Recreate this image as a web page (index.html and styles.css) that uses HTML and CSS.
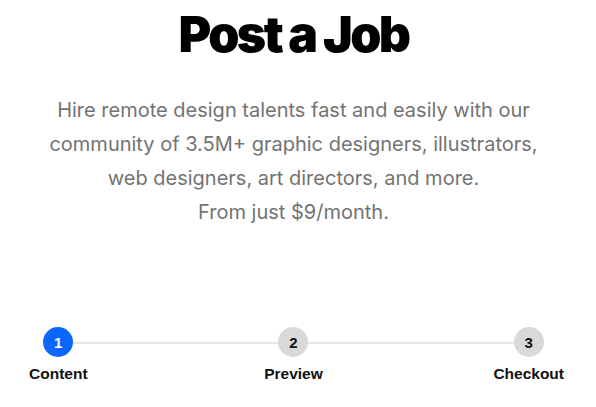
FILE: index.html
```html
<!DOCTYPE html>
<html>
<head>
<meta charset="utf-8">
<link rel="stylesheet" href="styles.css">
</head>
<body>
<main class="page">
  <h1 class="title">Post a Job</h1>
  <p class="lead">Hire remote design talents fast and easily with our community of 3.5M+ graphic designers, illustrators, web designers, art directors, and more.<br>From just $9/month.</p>
  <ol class="steps">
    <li class="step active"><span class="dot">1</span><span class="label">Content</span></li>
    <li class="step middle"><span class="dot">2</span><span class="label">Preview</span></li>
    <li class="step"><span class="dot">3</span><span class="label">Checkout</span></li>
  </ol>
</main>
</body>
</html>
```
FILE: styles.css
```css
html, body { margin: 0; padding: 0; background: #fff; }
.page {
  width: 596px;
  box-sizing: border-box;
  display: flex;
  flex-direction: column;
  align-items: center;
  font-family: Inter, "Noto Sans", sans-serif;
}
.title {
  margin: 2px 0 0 -9px;
  font-size: 50px;
  line-height: 64px;
  font-weight: 900;
  letter-spacing: -2.6px;
  color: #000;
}
.lead {
  margin: 27px 0 0 -9px;
  width: 510px;
  text-align: center;
  font-size: 20px;
  line-height: 34px;
  color: #737373;
}
.steps {
  list-style: none;
  margin: 98px 0 0 0;
  width: 596px;
  box-sizing: border-box;
  padding: 0 32px 0 29px;
  display: flex;
  justify-content: space-between;
  position: relative;
}
.steps::before {
  content: "";
  position: absolute;
  left: 60px;
  right: 68px;
  top: 15px;
  height: 2px;
  background: #e6e6e6;
}
.step {
  display: flex;
  flex-direction: column;
  align-items: center;
  position: relative;
}
.step.middle { margin-left: 6px; }
.dot {
  width: 30px;
  height: 30px;
  border-radius: 50%;
  background: #d9d9d9;
  color: #111;
  display: flex;
  align-items: center;
  justify-content: center;
  font-family: "Liberation Sans", Arial, sans-serif;
  font-weight: 700;
  font-size: 15px;
}
.step.active .dot { background: #0a66ff; color: #fff; }
.label {
  margin-top: 8px;
  font-family: "Liberation Sans", Arial, sans-serif;
  font-weight: 700;
  font-size: 15.5px;
  line-height: 17px;
  color: #111;
}
```
